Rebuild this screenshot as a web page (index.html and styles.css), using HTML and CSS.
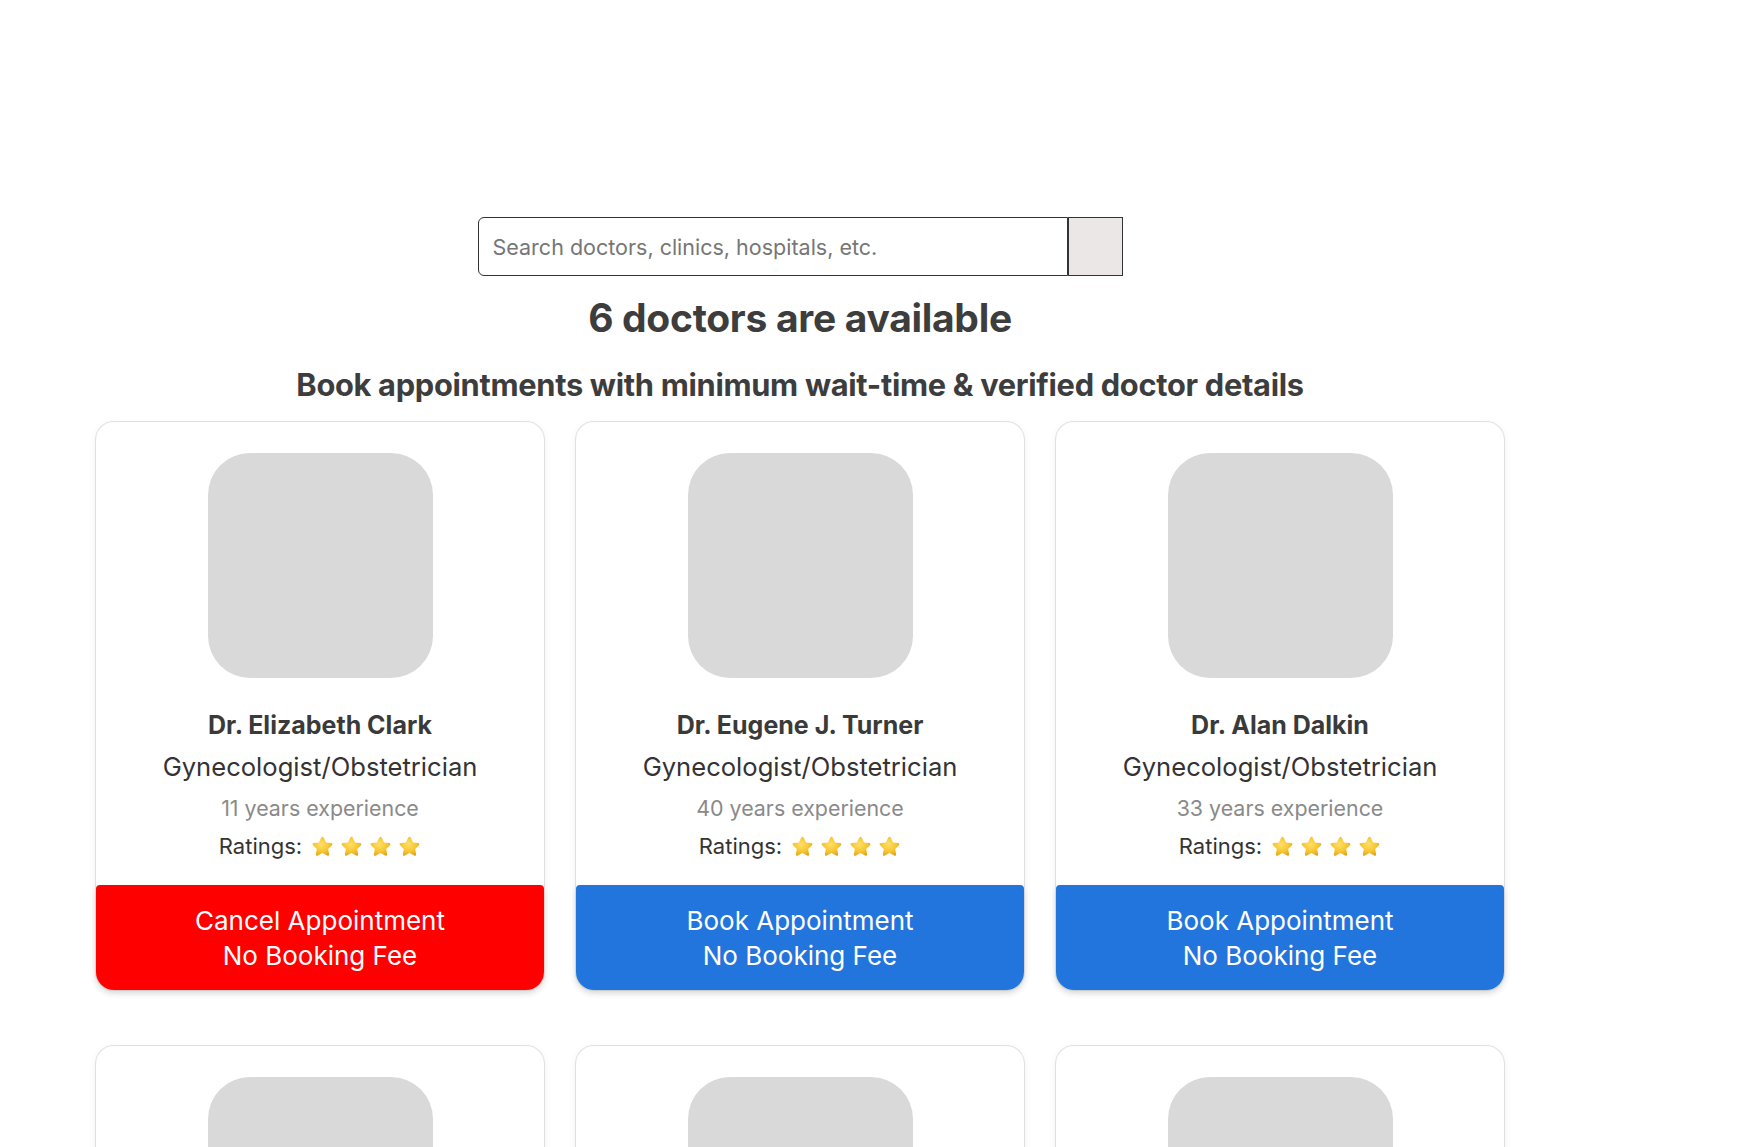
FILE: index.html
```html
<!DOCTYPE html>
<html lang="en">
<head>
<meta charset="utf-8">
<title>Doctors</title>
<link rel="stylesheet" href="styles.css">
</head>
<body>
<div class="page">
  <form class="search">
    <input class="search-input" type="text" placeholder="Search doctors, clinics, hospitals, etc.">
    <button class="search-btn" type="button"></button>
  </form>
  <h1 class="title">6 doctors are available</h1>
  <h2 class="subtitle">Book appointments with minimum wait-time &amp; verified doctor details</h2>
  <div class="cards">
    <div class="card">
      <div class="avatar"></div>
      <div class="name">Dr. Elizabeth Clark</div>
      <div class="spec">Gynecologist/Obstetrician</div>
      <div class="exp">11 years experience</div>
      <div class="rating">Ratings:
        <span class="stars">
          <svg class="star" viewBox="0 0 24 24"><use href="#star"/></svg>
          <svg class="star" viewBox="0 0 24 24"><use href="#star"/></svg>
          <svg class="star" viewBox="0 0 24 24"><use href="#star"/></svg>
          <svg class="star" viewBox="0 0 24 24"><use href="#star"/></svg>
        </span>
      </div>
      <button class="action cancel" type="button">Cancel Appointment<br>No Booking Fee</button>
    </div>
    <div class="card">
      <div class="avatar"></div>
      <div class="name">Dr. Eugene J. Turner</div>
      <div class="spec">Gynecologist/Obstetrician</div>
      <div class="exp">40 years experience</div>
      <div class="rating">Ratings:
        <span class="stars">
          <svg class="star" viewBox="0 0 24 24"><use href="#star"/></svg>
          <svg class="star" viewBox="0 0 24 24"><use href="#star"/></svg>
          <svg class="star" viewBox="0 0 24 24"><use href="#star"/></svg>
          <svg class="star" viewBox="0 0 24 24"><use href="#star"/></svg>
        </span>
      </div>
      <button class="action book" type="button">Book Appointment<br>No Booking Fee</button>
    </div>
    <div class="card">
      <div class="avatar"></div>
      <div class="name">Dr. Alan Dalkin</div>
      <div class="spec">Gynecologist/Obstetrician</div>
      <div class="exp">33 years experience</div>
      <div class="rating">Ratings:
        <span class="stars">
          <svg class="star" viewBox="0 0 24 24"><use href="#star"/></svg>
          <svg class="star" viewBox="0 0 24 24"><use href="#star"/></svg>
          <svg class="star" viewBox="0 0 24 24"><use href="#star"/></svg>
          <svg class="star" viewBox="0 0 24 24"><use href="#star"/></svg>
        </span>
      </div>
      <button class="action book" type="button">Book Appointment<br>No Booking Fee</button>
    </div>
    <div class="card">
      <div class="avatar"></div>
      <div class="name">Dr. Sarah Mitchell</div>
      <div class="spec">Gynecologist/Obstetrician</div>
      <div class="exp">15 years experience</div>
      <div class="rating">Ratings:
        <span class="stars">
          <svg class="star" viewBox="0 0 24 24"><use href="#star"/></svg>
          <svg class="star" viewBox="0 0 24 24"><use href="#star"/></svg>
          <svg class="star" viewBox="0 0 24 24"><use href="#star"/></svg>
          <svg class="star" viewBox="0 0 24 24"><use href="#star"/></svg>
        </span>
      </div>
      <button class="action book" type="button">Book Appointment<br>No Booking Fee</button>
    </div>
    <div class="card">
      <div class="avatar"></div>
      <div class="name">Dr. Robert Hayes</div>
      <div class="spec">Gynecologist/Obstetrician</div>
      <div class="exp">22 years experience</div>
      <div class="rating">Ratings:
        <span class="stars">
          <svg class="star" viewBox="0 0 24 24"><use href="#star"/></svg>
          <svg class="star" viewBox="0 0 24 24"><use href="#star"/></svg>
          <svg class="star" viewBox="0 0 24 24"><use href="#star"/></svg>
          <svg class="star" viewBox="0 0 24 24"><use href="#star"/></svg>
        </span>
      </div>
      <button class="action book" type="button">Book Appointment<br>No Booking Fee</button>
    </div>
    <div class="card">
      <div class="avatar"></div>
      <div class="name">Dr. Linda Moore</div>
      <div class="spec">Gynecologist/Obstetrician</div>
      <div class="exp">18 years experience</div>
      <div class="rating">Ratings:
        <span class="stars">
          <svg class="star" viewBox="0 0 24 24"><use href="#star"/></svg>
          <svg class="star" viewBox="0 0 24 24"><use href="#star"/></svg>
          <svg class="star" viewBox="0 0 24 24"><use href="#star"/></svg>
          <svg class="star" viewBox="0 0 24 24"><use href="#star"/></svg>
        </span>
      </div>
      <button class="action book" type="button">Book Appointment<br>No Booking Fee</button>
    </div>
  </div>
</div>
<svg class="defs" width="0" height="0" aria-hidden="true">
  <defs>
    <radialGradient id="starGrad" cx="45%" cy="40%" r="65%">
      <stop offset="0" stop-color="#ffe066"/>
      <stop offset="0.6" stop-color="#f7c531"/>
      <stop offset="1" stop-color="#e0a21a"/>
    </radialGradient>
    <path id="star" d="M12 1.8c.6 0 1 .3 1.3.9l2.4 5 5.4.7c1.2.2 1.6 1.6.8 2.4l-4 3.8 1 5.4c.2 1.2-1.1 2.1-2.1 1.5L12 18.9l-4.8 2.6c-1 .6-2.3-.3-2.1-1.5l1-5.4-4-3.8c-.8-.8-.4-2.2.8-2.4l5.4-.7 2.4-5c.3-.6.7-.9 1.3-.9z" fill="url(#starGrad)"/>
  </defs>
</svg>
</body>
</html>
```

FILE: styles.css
```css
* { box-sizing: border-box; }

html, body {
  margin: 0;
  padding: 0;
  background: #ffffff;
}

body {
  font-family: Inter, "Noto Sans", "Liberation Sans", sans-serif;
  color: #3a3a3a;
}

.defs {
  position: absolute;
  width: 0;
  height: 0;
}

.page {
  width: 1600px;
  display: flex;
  flex-direction: column;
  align-items: center;
  padding-top: 217px;
  padding-bottom: 60px;
}

.search {
  display: flex;
  width: 645px;
  height: 59px;
  margin: 0;
}

.search-input {
  flex: 1;
  height: 100%;
  border: 1px solid #333333;
  border-radius: 6px 0 0 6px;
  padding: 0 14px;
  font-family: Inter, "Noto Sans", sans-serif;
  font-size: 21.5px;
  color: #333;
  outline: none;
}

.search-input::placeholder {
  color: #767676;
}

.search-btn {
  width: 55px;
  height: 100%;
  border: 1px solid #333333;
  background: #ebe7e7;
  border-radius: 0;
  padding: 0;
}

.title {
  margin: 17px 0 0;
  font-size: 39px;
  line-height: 50px;
  font-weight: 700;
  color: #3d3d3d;
  letter-spacing: -0.3px;
}

.subtitle {
  margin: 22px 0 0;
  font-size: 30.8px;
  line-height: 40px;
  font-weight: 700;
  color: #3d3d3d;
  letter-spacing: -0.3px;
}

.cards {
  width: 100%;
  display: flex;
  flex-wrap: wrap;
  justify-content: center;
  column-gap: 32px;
  row-gap: 56px;
  margin-top: 17px;
}

.card {
  width: 448px;
  display: flex;
  flex-direction: column;
  align-items: center;
  padding-top: 31px;
  border-radius: 18px;
  background: #fff;
  box-shadow: 0 0 0 1px #e0e0e0, 0 2px 8px rgba(0, 0, 0, 0.07);
}

.avatar {
  width: 225px;
  height: 225px;
  border-radius: 42px;
  background: #d9d9d9;
}

.name {
  margin-top: 31px;
  font-size: 25px;
  line-height: 32px;
  font-weight: 700;
  color: #3a3a3a;
}

.spec {
  margin-top: 10px;
  font-size: 25.6px;
  line-height: 32px;
  color: #333333;
}

.exp {
  margin-top: 9px;
  font-size: 21.4px;
  line-height: 32px;
  color: #8a8a8a;
}

.rating {
  margin-top: 6px;
  font-size: 22px;
  line-height: 32px;
  color: #333333;
  display: flex;
  align-items: center;
  gap: 9px;
}

.stars {
  display: flex;
  gap: 6px;
}

.star {
  width: 23px;
  height: 23px;
  display: block;
}

.action {
  width: 100%;
  margin-top: 23px;
  padding: 18px 0 17px;
  border: none;
  border-radius: 4px 4px 18px 18px;
  font-family: Inter, "Noto Sans", sans-serif;
  font-size: 26px;
  line-height: 35px;
  color: #ffffff;
  box-shadow: 0 3px 6px rgba(0, 0, 0, 0.12);
  cursor: pointer;
}

.cancel { background: #ff0000; }
.book { background: #2275dc; }
```
